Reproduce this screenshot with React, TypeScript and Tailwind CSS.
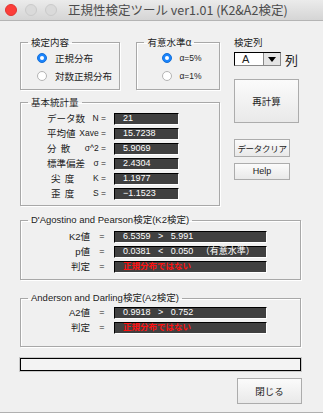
import React from 'react';

const jp = "font-['Noto_Sans_CJK_JP',sans-serif]";
const num = "font-['Liberation_Sans','Noto_Sans_CJK_JP',sans-serif]";

function Radio({ checked, label, labelClass }: { checked?: boolean; label: string; labelClass?: string }) {
  return (
    <div className="flex items-center h-[18px]">
      {checked ? (
        <span className="w-[10px] h-[10px] rounded-full bg-[#1b84fc] border border-[#1570d8] flex items-center justify-center">
          <span className="w-[4px] h-[4px] rounded-full bg-white" />
        </span>
      ) : (
        <span className="w-[10px] h-[10px] rounded-full bg-white border border-[#b4b4b4]" />
      )}
      <span className={labelClass ?? 'ml-[8px]'}>{label}</span>
    </div>
  );
}

function Group({ title, className, children }: { title: string; className: string; children: React.ReactNode }) {
  return (
    <fieldset className={`border border-[#a8a8a8] shadow-[1px_1px_0_#fff,inset_1px_1px_0_#fff] ${className}`}>
      <legend className="ml-[7px] px-[3px] leading-[12px] text-[9.5px] text-[#222]">{title}</legend>
      {children}
    </fieldset>
  );
}

function Field({ children, className }: { children: React.ReactNode; className?: string }) {
  return (
    <div
      className={`h-[12px] bg-[#404040] border-t border-l border-t-black border-l-black border-b border-r border-b-white border-r-white flex items-center pl-[8px] text-white text-[9px] leading-none whitespace-pre ${num} ${className ?? ''}`}
    >
      {children}
    </div>
  );
}

function StatRow({ name, sym, value, small, namePad }: { name: string; sym: string; value: string; small?: boolean; namePad?: string }) {
  return (
    <div className="flex items-center h-[15px] pl-[26px]">
      <div className="w-[59px] flex justify-between items-center text-[9.5px] leading-none whitespace-pre">
        <span className={namePad}>{name}</span>
        <span className={`${num} text-[8.5px]`}>{sym}</span>
      </div>
      <Field className={`ml-[8px] w-[65px] ${small ? 'text-[7.5px]' : ''}`}>{value}</Field>
    </div>
  );
}

function TestRow({ name, children }: { name: string; children: React.ReactNode }) {
  return (
    <div className="flex items-center h-[15px]">
      <div className={`w-[69px] text-right text-[9.5px] leading-none ${num}`}>{name}</div>
      <div className="w-[24px] text-center text-[9px] leading-none">=</div>
      <Field className="w-[153px]">{children}</Field>
    </div>
  );
}

function Button({ label, className }: { label: string; className: string }) {
  return (
    <button
      className={`border border-[#acacac] bg-gradient-to-b from-[#fbfbfb] to-[#e9e9e9] text-[#222] flex items-center justify-center whitespace-nowrap ${className}`}
    >
      {label}
    </button>
  );
}

export default function App() {
  return (
    <div className={`w-[323px] h-[413px] bg-[#f0f0f0] flex flex-col text-[#222] ${jp}`}>
      {/* title bar */}
      <div className="h-[21px] flex items-center bg-gradient-to-b from-[#ebebeb] to-[#d5d5d5] border-b border-[#b4b4b4] shrink-0">
        <span className="ml-[5px] w-[12px] h-[12px] rounded-full bg-[#fc3d39] border border-[#e0332f]" />
        <span className="ml-[8px] w-[12px] h-[12px] rounded-full bg-[#dadada] border border-[#cacaca]" />
        <span className="ml-[8px] w-[12px] h-[12px] rounded-full bg-[#dadada] border border-[#cacaca]" />
        <span className="ml-[11px] text-[12.5px] text-[#4c4c4c] leading-none whitespace-nowrap">正規性検定ツール ver1.01 (K2&amp;A2検定)</span>
      </div>

      <div className="pl-[20px] pt-[15px] flex flex-col">
        <div className="flex">
          {/* left column */}
          <div className="flex flex-col w-[200px]">
            <div className="flex">
              <Group title="検定内容" className="w-[101px] h-[54px]">
                <div className="pl-[16px] pt-[1px] text-[9.5px]">
                  <Radio checked label="正規分布" />
                  <Radio label="対数正規分布" />
                </div>
              </Group>
              <Group title="有意水準α" className="ml-[16px] w-[84px] h-[54px]">
                <div className={`pl-[25px] pt-[1px] text-[8.5px] ${num}`}>
                  <Radio checked label="α=5%" labelClass="ml-[7px]" />
                  <Radio label="α=1%" labelClass="ml-[7px]" />
                </div>
              </Group>
            </div>
            <Group title="基本統計量" className="mt-[6px] w-[200px] h-[110px]">
              <div className="pt-[3px]">
                <StatRow name="データ数" sym="N =" value="21" />
                <StatRow name="平均値" sym="Xave =" value="15.7238" />
                <StatRow name="分  散" sym="σ^2 =" value="5.9069" small />
                <StatRow name="標準偏差" sym="σ =" value="2.4304" />
                <StatRow name="尖  度" sym="K =" value="1.1977" namePad="pl-[4px]" />
                <StatRow name="歪  度" sym="S =" value="−1.1523" namePad="pl-[4px]" />
              </div>
            </Group>
          </div>

          {/* right column */}
          <div className="ml-[14px] flex flex-col">
            <div className="h-[12px] leading-[12px] text-[9.5px]">検定列</div>
            <div className="mt-[4px] flex items-center">
              <div className="w-[47px] h-[14px] bg-white border border-t-black border-l-black border-b-[#888] border-r-[#888] flex">
                <span className={`flex-1 pl-[7px] text-[11px] leading-[12px] ${num}`}>A</span>
                <span className="w-[17px] bg-[#e4e4e4] border-l border-[#888] flex items-center justify-center">
                  <svg width="8" height="5" viewBox="0 0 8 5">
                    <path d="M0 0h8L4 5z" fill="#000" />
                  </svg>
                </span>
              </div>
              <span className="ml-[4px] text-[13px] leading-none">列</span>
            </div>
            <Button label="再計算" className="mt-[13px] w-[65px] h-[44px] text-[9.5px]" />
            <Button label="データクリア" className="mt-[16px] w-[56px] h-[18px] text-[8.5px] tracking-[-0.3px]" />
            <Button label="Help" className={`mt-[6px] w-[56px] h-[17px] ${num} text-[9px]`} />
          </div>
        </div>

        <Group title="D'Agostino and Pearson検定(K2検定)" className={`mt-[8px] w-[281px] h-[66px] ${num}`}>
          <div className="pt-[3px]">
            <TestRow name="K2値">6.5359   &gt;   5.991</TestRow>
            <TestRow name="p値">0.0381   &lt;   0.050   （有意水準）</TestRow>
            <TestRow name="判定">
              <span className="text-[#ff1010] font-bold text-[8.5px]">正規分布ではない</span>
            </TestRow>
          </div>
        </Group>

        <Group title="Anderson and Darling検定(A2検定)" className={`mt-[12px] w-[281px] h-[55px] ${num}`}>
          <div className="pt-[1px]">
            <TestRow name="A2値">0.9918   &gt;   0.752</TestRow>
            <TestRow name="判定">
              <span className="text-[#ff1010] font-bold text-[8.5px]">正規分布ではない</span>
            </TestRow>
          </div>
        </Group>

        <div className="mt-[11px] w-[281px] h-[13px] border border-black bg-[#f3f3f3] shadow-[0_0_0_1px_#c8c8c8]" />

        <div className="flex justify-end w-[282px]">
          <Button label="閉じる" className="mt-[7px] w-[65px] h-[26px] text-[9.5px]" />
        </div>
      </div>
      <div className="mt-auto h-[2px] border-b border-[#b0b0b0]" />
    </div>
  );
}
